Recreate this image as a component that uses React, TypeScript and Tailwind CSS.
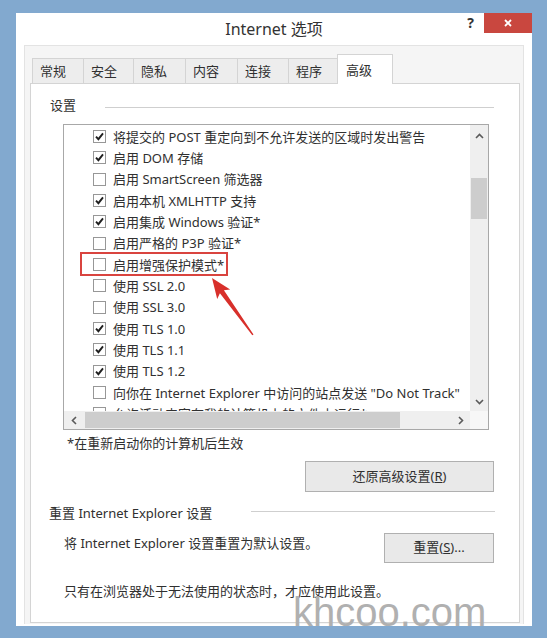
import React from "react";

const rows: [boolean, string][] = [
  [true, "将提交的 POST 重定向到不允许发送的区域时发出警告"],
  [true, "启用 DOM 存储"],
  [false, "启用 SmartScreen 筛选器"],
  [true, "启用本机 XMLHTTP 支持"],
  [true, "启用集成 Windows 验证*"],
  [false, "启用严格的 P3P 验证*"],
  [false, "启用增强保护模式*"],
  [false, "使用 SSL 2.0"],
  [false, "使用 SSL 3.0"],
  [true, "使用 TLS 1.0"],
  [true, "使用 TLS 1.1"],
  [true, "使用 TLS 1.2"],
  [false, "向你在 Internet Explorer 中访问的站点发送 \"Do Not Track\""],
  [false, "允许活动内容在我的计算机上的文件中运行*"],
];

const tabs: [string, string][] = [
  ["常规", "w-[51px]"],
  ["安全", "w-[50px]"],
  ["隐私", "w-[52px]"],
  ["内容", "w-[52px]"],
  ["连接", "w-[51px]"],
  ["程序", "w-[49px]"],
];

function Check({ on }: { on: boolean }) {
  return (
    <div className="w-[13px] h-[13px] border border-[#979797] bg-white flex items-center justify-center shrink-0">
      {on && (
        <svg width="11" height="11" viewBox="0 0 11 11">
          <path d="M2 5.6 L4.4 8.2 L9 2.4" fill="none" stroke="#1f1f1f" strokeWidth="1.9" />
        </svg>
      )}
    </div>
  );
}

function Chev({ d }: { d: string }) {
  return (
    <svg width="9" height="9" viewBox="0 0 9 9">
      <path d={d} fill="none" stroke="#5a5a5a" strokeWidth="1.6" />
    </svg>
  );
}

export default function App() {
  return (
    <div className="relative w-[547px] h-[638px] overflow-hidden bg-[#82a9cf] pl-[16px] pt-[13px] font-['Noto_Sans','Noto_Sans_CJK_SC',sans-serif] text-[#303030]">
      <div className="w-[516px] h-[613px] bg-white flex flex-col">
        {/* title bar */}
        <div className="h-[32px] grid grid-cols-[1fr_auto_1fr] shrink-0">
          <div />
          <div className="flex items-center text-[16px] text-[#333]">Internet 选项</div>
          <div className="flex justify-end items-start">
            <span className="h-[20px] leading-[20px] text-[14px] font-bold text-[#333] mr-[10px]">?</span>
            <div className="w-[48px] h-[20px] bg-[#c9473f] flex items-center justify-center">
              <svg width="8" height="8" viewBox="0 0 8 8">
                <path d="M1 1 L7 7 M7 1 L1 7" stroke="#fff" strokeWidth="1.8" />
              </svg>
            </div>
          </div>
        </div>
        {/* client area */}
        <div className="flex-1 mx-[8px] mb-[2px] bg-[#f5f5f5] border-t border-x border-[#e3e3e3] pl-[5px] pr-[3px] pt-[8px] flex flex-col">
          <div className="relative z-10 -mb-px h-[30px] flex items-end ml-[2px] text-[13px]">
            {tabs.map(([t, w], i) => (
              <div
                key={t}
                className={`${w} h-[26px] bg-[#ededed] border-t border-l border-b border-[#d4d4d4] pl-[7px] leading-[24px] ${i === tabs.length - 1 ? "border-r-0" : ""}`}
              >
                {t}
              </div>
            ))}
            <div className="w-[56px] h-[30px] bg-white border-t border-x border-[#d4d4d4] pl-[8px] leading-[30px]">
              高级
            </div>
          </div>
          <div className="flex-1 mb-[1px] bg-white border border-[#d4d4d4] flex flex-col text-[13px]">
            {/* 设置 heading */}
            <div className="mt-[12px] h-[18px] flex items-center pl-[19px]">
              <span className="leading-[18px]">设置</span>
              <div className="flex-1 h-px bg-[#cfcfcf] ml-[29px] mr-[25px] mt-[4px]" />
            </div>
            {/* listbox */}
            <div className="mt-[10px] ml-[32px] w-[426px] h-[306px] border border-[#a8a8a8] flex flex-col">
              <div className="flex flex-1 min-h-0">
                <div className="flex-1 overflow-hidden pt-[1px]">
                  {rows.map(([on, t], i) => (
                    <div key={i} className="h-[21.33px] flex items-center pl-[29px] whitespace-nowrap">
                      <Check on={on} />
                      <span className="ml-[7px] leading-[18px]">{t}</span>
                    </div>
                  ))}
                </div>
                <div className="w-[18px] bg-[#efefef] flex flex-col items-center">
                  <div className="h-[22px] flex items-center justify-center">
                    <Chev d="M1 6 L4.5 2.5 L8 6" />
                  </div>
                  <div className="mt-[31px] w-[16px] h-[41px] bg-[#cdcdcd]" />
                  <div className="mt-auto h-[20px] flex items-center justify-center">
                    <Chev d="M1 3 L4.5 6.5 L8 3" />
                  </div>
                </div>
              </div>
              <div className="h-[18px] flex shrink-0 bg-[#efefef]">
                <div className="w-[20px] flex items-center justify-center">
                  <Chev d="M6 1 L2.5 4.5 L6 8" />
                </div>
                <div className="flex-1 flex items-center">
                  <div className="ml-[1px] w-[315px] h-[16px] bg-[#cdcdcd]" />
                </div>
                <div className="w-[20px] flex items-center justify-center">
                  <Chev d="M3 1 L6.5 4.5 L3 8" />
                </div>
                <div className="w-[18px] bg-[#f7f7f7]" />
              </div>
            </div>
            {/* note */}
            <div className="mt-[4px] h-[18px] leading-[18px] pl-[36px]">*在重新启动你的计算机后生效</div>
            <div className="mt-[9px] flex justify-end pr-[25px]">
              <div className="w-[189px] h-[31px] bg-[#e9e9e9] border border-[#b0b0b0] flex items-center justify-center">
                还原高级设置(<span className="underline">R</span>)
              </div>
            </div>
            {/* reset heading */}
            <div className="mt-[12px] h-[18px] flex items-center pl-[18px]">
              <span className="leading-[18px]">重置 Internet Explorer 设置</span>
              <div className="ml-auto w-[244px] h-px bg-[#cfcfcf] mr-[24px] mb-[4px]" />
            </div>
            <div className="mt-[11px] flex items-start justify-between pl-[33px] pr-[25px]">
              <span className="mt-[1px] h-[18px] leading-[18px]">将 Internet Explorer 设置重置为默认设置。</span>
              <div className="w-[110px] h-[30px] bg-[#e9e9e9] border border-[#b0b0b0] flex items-center justify-center">
                重置(<span className="underline">S</span>)...
              </div>
            </div>
            <div className="mt-[19px] h-[18px] leading-[18px] pl-[33px]">只有在浏览器处于无法使用的状态时，才应使用此设置。</div>
          </div>
        </div>
      </div>

      {/* highlight box */}
      <div className="absolute left-[80px] top-[252px] w-[148px] h-[24px] border-2 border-[#d9443f]" />
      {/* red arrow */}
      <svg className="absolute left-0 top-0" width="547" height="638" viewBox="0 0 547 638">
        <polygon
          points="212,278 230.2,289.5 223.9,290.3 253.5,334.4 252.3,335.2 219.9,293.3 217.2,298.9"
          fill="#d8302b"
        />
      </svg>
      {/* watermark */}
      <div className="absolute left-[293px] top-[592px] text-[40px] leading-none text-[#b0b0b0] font-['Liberation_Sans',sans-serif]">
        khcoo.com
      </div>
    </div>
  );
}
